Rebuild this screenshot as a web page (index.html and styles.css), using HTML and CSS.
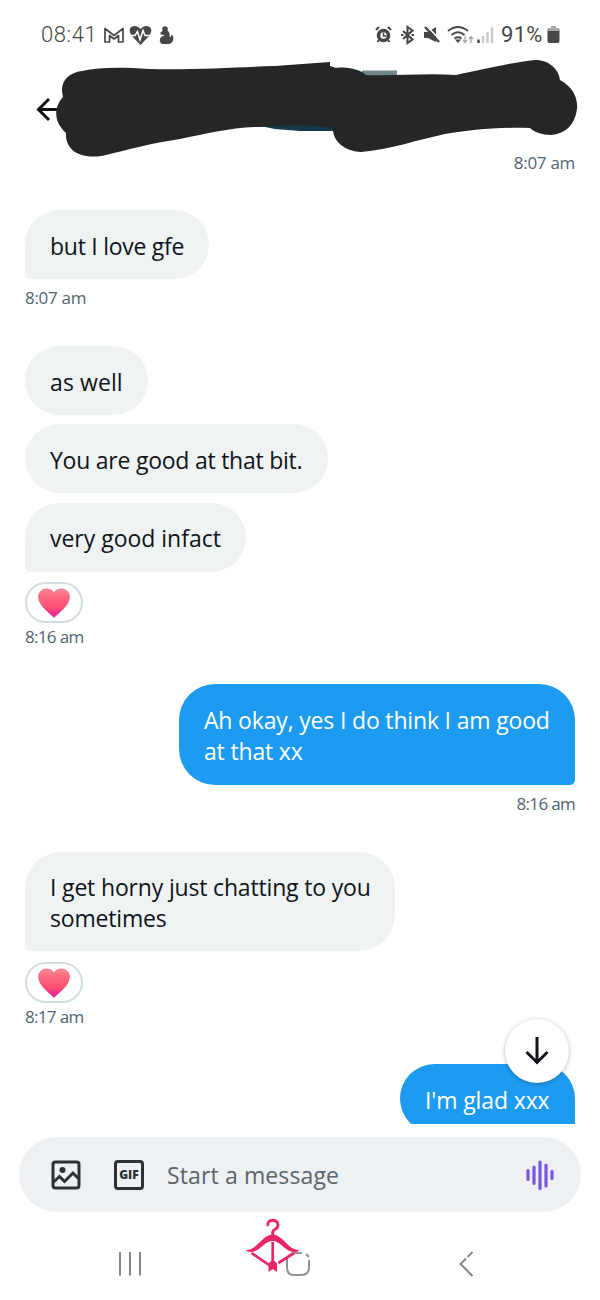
FILE: index.html
```html
<!DOCTYPE html>
<html lang="en">
<head>
<meta charset="utf-8">
<meta name="viewport" content="width=device-width, initial-scale=1">
<title>Messages</title>
<link rel="stylesheet" href="styles.css">
</head>
<body>
<div class="phone">
  <header class="status">
    <div class="status-left">
      <span class="clock">08:41</span>
      <svg class="left-icons" width="74" height="24" viewBox="0 0 74 24">
        <path d="M2 19V5.500L11 12.500L20 5.500V19H15.500V12.500L11 16L6.500 12.500V19Z" fill="none" stroke="#474747" stroke-width="1.700" stroke-linejoin="round"/>
        <path d="M37.500 22L29 13C22 3 33 0 37.500 6C42 0 53 3 46 13Z" fill="#474747"/>
        <path d="M26 12.500H32L34.500 8.500L37 17L40 7.500L42 12.500H49" fill="none" stroke="#fff" stroke-width="1.500"/>
        <circle cx="62" cy="6" r="2.800" fill="#474747"/>
        <path d="M60 7.500H64.500Q67.500 10 66.500 13L67.500 14.500L68.500 11.500L70 13Q71 17 68.500 20L66 21H59Q55 18 58 14L62 12L57.500 11.500V9.500Z" fill="#474747"/>
      </svg>
    </div>
    <div class="status-right">
      <svg class="right-icons" width="122" height="26" viewBox="0 0 122 26">
        <g fill="none" stroke="#474747">
          <circle cx="9.500" cy="13.500" r="5" stroke-width="3.600"/>
          <path d="M2 8L5 5M14 5L17 8M5 18L3.500 20M14 18L15.500 20" stroke-width="2"/>
          <path d="M9.500 10.500V14H12.500" stroke-width="1.500"/>
          <path d="M29 9L38.500 17.500L33.500 21V5L38.500 8.500L29 17" stroke-width="2.100"/>
        </g>
        <path d="M27 13H29.500M37.500 13H40" stroke="#474747" stroke-width="2.200"/>
        <path d="M50 10H54L62 5V20L54 16H50Z" fill="#474747"/>
        <path d="M53 4L67 19" stroke="#fff" stroke-width="1.600"/>
        <path d="M51 5L65 20" stroke="#474747" stroke-width="2.400"/>
        <g fill="none" stroke="#474747" stroke-width="2">
          <path d="M74 9Q84 1 94 9M77.500 13Q84 7.500 90.500 13M80.500 16.500Q84 14 87.500 16.500"/>
        </g>
        <path d="M81 17.500H87L84 21Z" fill="#474747"/>
        <path d="M91 14V20M89 18L91 20.500L93 18M97 21V15M95 17L97 14.500L99 17" fill="none" stroke="#a9a9a9" stroke-width="1.400"/>
        <path d="M104.500 17.500V21" stroke="#474747" stroke-width="2.400"/>
        <path d="M109 14V21M113.500 10V21M118 5.500V21" stroke="#c9c9c9" stroke-width="2.400"/>
      </svg>
      <span class="percent">91%</span>
      <svg width="13" height="18" viewBox="0 0 13 18"><path d="M4 0H9V4H4Z" fill="#a9a9a9"/><rect x=".5" y="2" width="12" height="15" rx="2" fill="#474747"/><path d="M1 3.500Q1 2 2.500 2H10.500Q12 2 12 3.500V5H1Z" fill="#a9a9a9"/></svg>
    </div>
  </header>

  <div class="topbar">
    <svg width="600" height="106" viewBox="0 56 600 106">
      <path d="M64 109.500H39M49 99L38.500 109.500L49 120" fill="none" stroke="#0f1419" stroke-width="3"/>
      <path d="M362 70.500H397V80H362Z" fill="#71868c"/>
      <path d="M255 125L335 118V131H300L275 129Z" fill="#143a4b"/>
      <path d="M63 97C59 83 67 73 82 71C100 67 120 67 150 69C195 70 240 67 275 66L330 62V66L336 68C350 66 362 71 366 75C395 76 427 73 456 75C475 71 508 63 535 60C550 60 559 70 560 80C573 87 578 98 577 109C575 125 565 134 551 135C542 135 534 132 530 128C497 127 470 130 445 134C420 139 389 150 361 152C344 151 333 141 333 129C308 122 273 127 255 127C229 128 204 134 180 139C151 143 127 150 106 155C85 160 65 153 66 133C53 121 54 107 63 97Z" fill="#262626"/>
    </svg>
  </div>

  <main class="chat">
    <div class="stamp out first">8:07 am</div>

    <div class="bubble in tail w-love">but I love gfe</div>
    <div class="stamp after">8:07 am</div>

    <div class="bubble in w-well">as well</div>
    <div class="bubble in w-bit">You are good at that bit.</div>
    <div class="bubble in tail w-fact">very good infact</div>
    <div class="reaction"><svg width="34" height="32" viewBox="0 0 34 32"><defs><linearGradient id="heart" x2="0" y2="1"><stop offset="0" stop-color="#ff8b91"/><stop offset=".25" stop-color="#fb6c7f"/><stop offset=".65" stop-color="#fd4e73"/><stop offset="1" stop-color="#e0149f"/></linearGradient></defs><path d="M17 30.500C13 26 1.500 19 1.500 9.500C2 1 13.500-.5 17 6C20.500-.5 32 1 32.500 9.500C32.500 19 21 26 17 30.500Z" fill="url(#heart)" stroke="#e9577b" stroke-width=".7"/></svg></div>
    <div class="stamp narrow after-reaction">8:16 am</div>

    <div class="bubble mine tail w-okay">Ah okay, yes I do think I am good<br>at that xx</div>
    <div class="stamp narrow out after">8:16 am</div>

    <div class="bubble in tail tall w-chat">I get horny just chatting to you<br>sometimes</div>
    <div class="reaction"><svg width="34" height="32" viewBox="0 0 34 32"><path d="M17 30.500C13 26 1.500 19 1.500 9.500C2 1 13.500-.5 17 6C20.500-.5 32 1 32.500 9.500C32.500 19 21 26 17 30.500Z" fill="url(#heart)" stroke="#e9577b" stroke-width=".7"/></svg></div>
    <div class="stamp narrow after-reaction">8:17 am</div>

    <div class="bubble mine tail w-glad">I'm glad xxx</div>
  </main>

  <button class="jump" aria-label="Jump to latest">
    <svg width="28" height="30" viewBox="0 0 28 30"><path d="M14 1V26.500M3.500 16L14 26.500L24.500 16" fill="none" stroke="#0f1419" stroke-width="3"/></svg>
  </button>

  <div class="composer">
    <svg width="30" height="30" viewBox="0 0 30 30"><rect x="2" y="2" width="26" height="26" rx="2.500" fill="none" stroke="#2c3136" stroke-width="3"/><circle cx="11.500" cy="10" r="3" fill="#2c3136"/><path d="M2 22.500L8.500 16.500L13.500 21.500L22 13L28 19" fill="none" stroke="#2c3136" stroke-width="3"/></svg>
    <div class="gif">GIF</div>
    <span class="placeholder">Start a message</span>
    <svg width="30" height="30" viewBox="0 0 30 30"><path d="M3 10.500V19.500M9 7V23.500M15 2V28.500M21 5V26M27 11.500V18.500" fill="none" stroke="#7856e2" stroke-width="3.200" stroke-linecap="round"/></svg>
  </div>

  <nav class="nav">
    <svg width="600" height="88" viewBox="0 1212 600 88" fill="none">
      <path d="M120 1252V1275.500M130 1252V1275.500M140 1252V1275.500" stroke="#858585" stroke-width="2"/>
      <path d="M293 1253H302M306 1254L309 1257M309 1260V1267Q309 1275 301 1275H294Q287 1275 287 1267V1258" stroke="#929292" stroke-width="2"/>
      <path d="M472.500 1252L467.500 1257M466 1258.500L460.500 1264L472.500 1276" stroke="#858585" stroke-width="2"/>
      <g stroke="#ea2566">
        <path d="M268 1226C266 1219 278 1218 278 1225C278 1230 272.700 1229 272.700 1232V1237" stroke-width="2.900"/>
        <path d="M272.700 1242V1264M251.500 1253L269 1265M294 1253L278.500 1263" stroke-width="2.700"/>
      </g>
      <path d="M246.500 1250C257 1250 262 1235 272.700 1234.500C283 1235 288 1250 299 1250Q299 1252 294 1252C285 1252 281 1241 272.700 1241C264 1241 260 1252 251 1252Q246 1252 246.500 1250Z" fill="#ea2566"/>
      <path d="M272.700 1259.500L277 1263.500V1272L272.700 1269L268.500 1272V1263.500Z" fill="#ea2566"/>
    </svg>
  </nav>
</div>
</body>
</html>
```
FILE: styles.css
```css
* { box-sizing: border-box; }
body { margin: 0; background: #fff; }
svg { display: block; flex: none; }

.phone {
  position: relative;
  display: flex;
  flex-direction: column;
  width: 600px;
  height: 1300px;
  overflow: hidden;
  font-family: "Open Sans", "Noto Sans", sans-serif;
  color: #0f1419;
}

.status {
  flex: none;
  display: flex;
  justify-content: space-between;
  height: 56px;
  padding: 14px 40px 0 41px;
  font-family: Roboto, sans-serif;
  font-size: 22px;
  line-height: 42px;
  color: #474747;
}
.status-left, .status-right { display: flex; align-items: center; height: 42px; }
.clock { width: 62px; font-weight: 300; letter-spacing: .55px; }
.percent { width: 46px; margin-left: 5px; letter-spacing: .3px; white-space: nowrap; }

.topbar { flex: none; height: 96px; }

.chat {
  flex: none;
  display: flex;
  flex-direction: column;
  align-items: flex-start;
  height: 972px;
  padding: 0 25px;
  overflow: hidden;
}
.bubble {
  flex: none;
  height: 69px;
  padding: 21px 0 0 25px;
  border-radius: 36px;
  font-size: 23px;
  line-height: 31px;
  white-space: nowrap;
}
.in { background: #eff3f4; }
.in.tail { border-bottom-left-radius: 5px; }
.mine { align-self: flex-end; background: #1d9bf0; color: #fff; }
.mine.tail { border-bottom-right-radius: 5px; }

.w-love { width: 184px; margin-top: 36px; letter-spacing: -.27px; }
.w-well { width: 123px; margin-top: 37px; letter-spacing: .1px; }
.w-bit { width: 303px; margin-top: 9px; letter-spacing: -.24px; }
.w-fact { width: 221px; margin-top: 10px; padding-top: 20px; letter-spacing: -.02px; }
.w-okay { width: 396px; height: 101px; margin-top: 36px; letter-spacing: -.17px; }
.w-chat { width: 370px; height: 99px; margin-top: 37px; padding-top: 20px; letter-spacing: -.17px; }
.w-glad { width: 175px; margin-top: 36px; letter-spacing: -.12px; }

.stamp {
  flex: none;
  height: 22px;
  font-size: 17px;
  line-height: 22px;
  letter-spacing: -.3px;
  white-space: nowrap;
  color: #536471;
}
.stamp.narrow { letter-spacing: -.68px; }
.stamp.out { align-self: flex-end; }
.after { margin-top: 8px; }
.after-reaction { margin-top: 3px; }

.reaction {
  flex: none;
  display: flex;
  align-items: center;
  justify-content: center;
  width: 58px;
  height: 41px;
  margin-top: 10px;
  border: 2px solid #d3dde1;
  border-radius: 21px;
}
.w-chat + .reaction { margin-top: 11px; }

.jump {
  position: absolute;
  top: 1019px;
  left: 505px;
  display: flex;
  align-items: center;
  justify-content: center;
  width: 64px;
  height: 64px;
  padding: 0;
  border: 0;
  border-radius: 50%;
  background: #fff;
  box-shadow: 0 1px 4px rgba(0, 0, 0, .28);
}

.composer {
  flex: none;
  display: flex;
  align-items: center;
  height: 75px;
  margin: 13px 19px 0;
  padding: 0 26px 0 32px;
  border-radius: 38px;
  background: #eef1f4;
}
.gif {
  flex: none;
  width: 30px;
  height: 30px;
  margin-left: 33px;
  border: 3px solid #2c3136;
  border-radius: 4px;
  font-size: 12px;
  font-weight: 800;
  line-height: 24px;
  text-align: center;
  color: #2c3136;
}
.placeholder {
  flex: 1;
  margin-left: 23px;
  font-size: 23px;
  letter-spacing: .12px;
  color: #5d6369;
}
.nav { flex: none; height: 88px; }
```
